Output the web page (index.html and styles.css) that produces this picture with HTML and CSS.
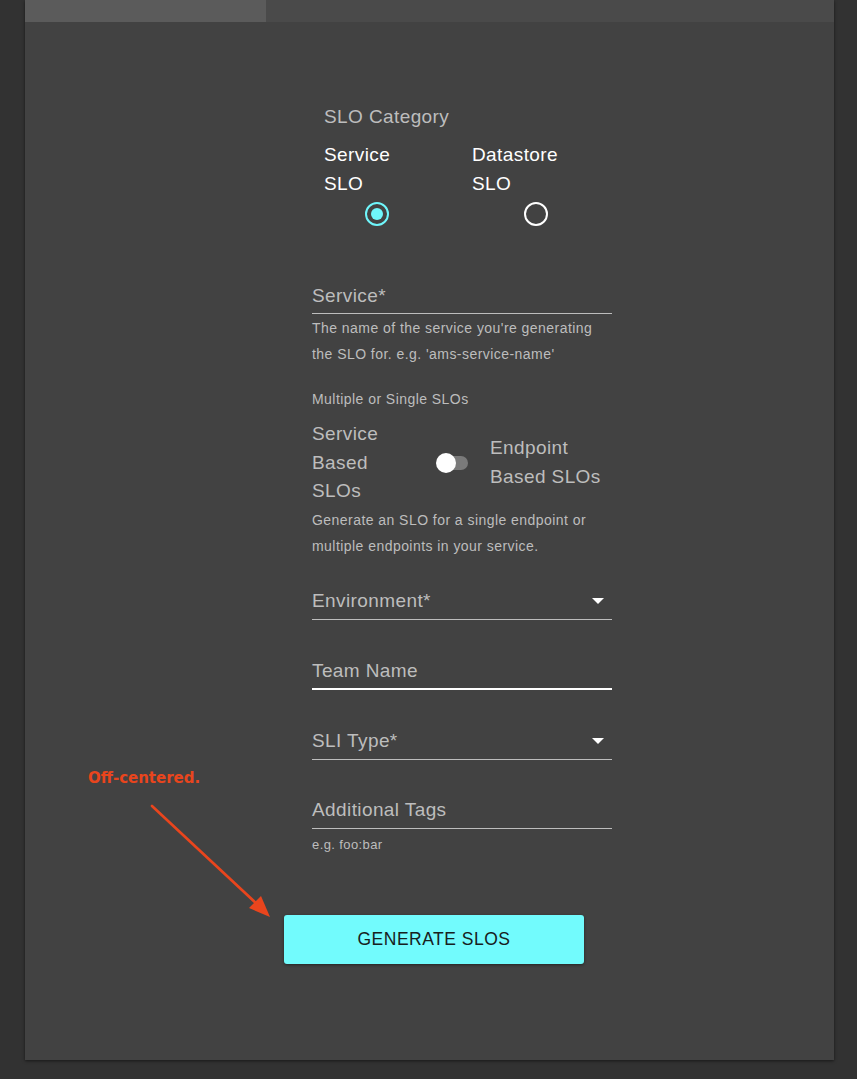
FILE: index.html
```html
<!DOCTYPE html>
<html>
<head>
<meta charset="utf-8">
<link rel="stylesheet" href="styles.css">
</head>
<body>
<div class="card">
  <div class="tabs">
    <div class="tab active"></div>
    <div class="tab"></div>
  </div>
  <form class="form">
    <div class="category">
      <div class="category-title">SLO Category</div>
      <div class="radios">
        <div class="radio-item col1">
          <div class="radio-label">Service<br>SLO</div>
          <span class="radio checked"><span class="dot"></span></span>
        </div>
        <div class="radio-item col2">
          <div class="radio-label">Datastore<br>SLO</div>
          <span class="radio"></span>
        </div>
      </div>
    </div>

    <div class="field f-service">
      <div class="input"><span>Service*</span></div>
      <div class="helper">The name of the service you're generating the SLO for. e.g. 'ams-service-name'</div>
    </div>

    <div class="switch-block">
      <div class="helper">Multiple or Single SLOs</div>
      <div class="switch-row">
        <div class="switch-left">Service<br>Based<br>SLOs</div>
        <div class="switch"><span class="track"></span><span class="thumb"></span></div>
        <div class="switch-right">Endpoint<br>Based SLOs</div>
      </div>
      <div class="helper">Generate an SLO for a single endpoint or multiple endpoints in your service.</div>
    </div>

    <div class="field f-env">
      <div class="input"><span>Environment*</span><span class="caret"></span></div>
    </div>

    <div class="field f-team">
      <div class="input focused"><span>Team Name</span></div>
    </div>

    <div class="field f-sli">
      <div class="input"><span>SLI Type*</span><span class="caret"></span></div>
    </div>

    <div class="field f-tags">
      <div class="input"><span>Additional Tags</span></div>
      <div class="helper small">e.g. foo:bar</div>
    </div>
  </form>
  <div class="actions">
    <button class="btn" type="button">GENERATE SLOS</button>
  </div>
</div>

<div class="note">Off-centered.</div>
<svg class="arrow" width="140" height="130" viewBox="0 0 140 130">
  <line x1="6" y1="9" x2="112" y2="108" stroke="#e9451d" stroke-width="2.6" stroke-linecap="round"/>
  <polygon points="124,120 103,111 115,99" fill="#e9451d"/>
</svg>
</body>
</html>
```

FILE: styles.css
```css
html, body {
  margin: 0;
  padding: 0;
}
body {
  background: #323232;
  font-family: "Liberation Sans", Arial, sans-serif;
  width: 857px;
  height: 1079px;
  position: relative;
  overflow: hidden;
}
.card {
  margin-left: 25px;
  width: 809px;
  height: 1060px;
  background: #424242;
  box-shadow: 0 1px 3px rgba(0, 0, 0, 0.55);
  display: flex;
  flex-direction: column;
}
.tabs {
  display: flex;
  height: 22px;
  background: #4a4a4a;
}
.tab.active {
  width: 241px;
  background: #5b5b5b;
}
.form {
  margin-left: 287px;
  width: 300px;
  display: flex;
  flex-direction: column;
}
.category {
  margin-top: 80px;
  padding-left: 12px;
  font-size: 19px;
  letter-spacing: 0.4px;
  line-height: 29px;
}
.category-title {
  color: #bdbdbd;
}
.radios {
  display: flex;
  gap: 42px;
  margin-top: 9px;
}
.radio-item {
  display: flex;
  flex-direction: column;
}
.col1 { width: 106px; }
.col2 { width: 128px; }
.radio-label {
  color: #ffffff;
}
.radio {
  margin-top: 4px;
  align-self: center;
  width: 20px;
  height: 20px;
  border: 2px solid #ffffff;
  border-radius: 50%;
  display: flex;
  align-items: center;
  justify-content: center;
}
.radio.checked {
  border-color: #6ff6fb;
}
.radio .dot {
  width: 12px;
  height: 12px;
  border-radius: 50%;
  background: #6ff6fb;
}
.field {
  display: flex;
  flex-direction: column;
}
.input {
  display: flex;
  justify-content: space-between;
  align-items: center;
  height: 29px;
  padding-bottom: 3px;
  border-bottom: 1px solid #bdbdbd;
  font-size: 19px;
  letter-spacing: 0.4px;
  color: #bdbdbd;
}
.input.focused {
  border-bottom: 2px solid #ffffff;
  padding-bottom: 2px;
}
.caret {
  width: 0;
  height: 0;
  margin-right: 8px;
  border-left: 6px solid transparent;
  border-right: 6px solid transparent;
  border-top: 6px solid #ffffff;
}
.helper {
  font-size: 14px;
  letter-spacing: 0.45px;
  line-height: 26px;
  color: #bdbdbd;
}
.helper.small {
  font-size: 13px;
  letter-spacing: 0.4px;
  line-height: 20px;
  margin-top: 6px;
}
.f-service { margin-top: 55px; }
.f-service .helper { margin-top: 1px; }
.switch-block {
  margin-top: 19px;
  display: flex;
  flex-direction: column;
}
.switch-row {
  display: flex;
  align-items: center;
  margin-top: 8px;
  font-size: 19px;
  letter-spacing: 0.4px;
  line-height: 28.5px;
  color: #bdbdbd;
}
.switch-left {
  width: 78px;
}
.switch {
  position: relative;
  width: 34px;
  height: 20px;
  margin-left: 46px;
}
.switch .track {
  position: absolute;
  left: 8px;
  top: 3px;
  width: 24px;
  height: 14px;
  border-radius: 7px;
  background: #7a7a7a;
}
.switch .thumb {
  position: absolute;
  left: 0;
  top: 0;
  width: 20px;
  height: 20px;
  border-radius: 50%;
  background: #ffffff;
}
.switch-right {
  margin-left: 20px;
}
.switch-block > .helper:last-child {
  margin-top: 1px;
}
.f-env { margin-top: 28px; }
.f-team { margin-top: 37px; }
.f-sli { margin-top: 37px; }
.f-tags { margin-top: 36px; }
.actions {
  margin-top: 60px;
  margin-left: 259px;
}
.btn {
  width: 300px;
  height: 49px;
  border: none;
  border-radius: 3px;
  background: #72fbfd;
  color: #172020;
  font-family: "Liberation Sans", Arial, sans-serif;
  font-size: 17.5px;
  letter-spacing: 0.5px;
  box-shadow: 0 1px 3px rgba(0, 0, 0, 0.45);
  padding: 0;
}
.note {
  position: absolute;
  left: 88px;
  top: 767px;
  font-family: "DejaVu Sans", sans-serif;
  font-weight: bold;
  font-size: 15px;
  line-height: 22px;
  color: #e9451d;
}
.arrow {
  position: absolute;
  left: 146px;
  top: 797px;
}
```
